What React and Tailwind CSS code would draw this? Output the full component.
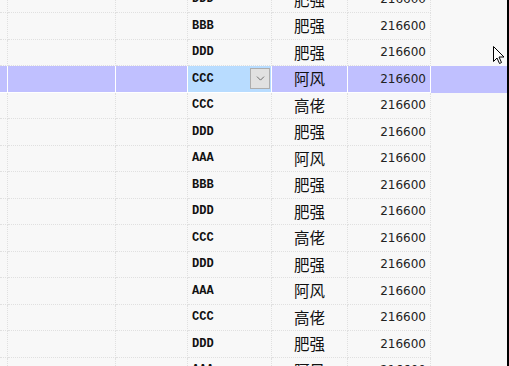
import { ChevronDown } from "lucide-react";

const rows = [
  ["DDD", "肥强"],
  ["BBB", "肥强"],
  ["DDD", "肥强"],
  ["CCC", "阿风"],
  ["CCC", "高佬"],
  ["DDD", "肥强"],
  ["AAA", "阿风"],
  ["BBB", "肥强"],
  ["DDD", "肥强"],
  ["CCC", "高佬"],
  ["DDD", "肥强"],
  ["AAA", "阿风"],
  ["CCC", "高佬"],
  ["DDD", "肥强"],
  ["AAA", "阿风"],
];

const SELECTED = 3;

function Row({ code, name, selected }) {
  const line = selected ? "border-white border-solid" : "border-[#e0e0e0] border-dotted";
  return (
    <div className={`flex shrink-0 h-[26.5px] ${selected ? "bg-[#c0c0ff]" : ""}`}>
      <div className={`w-[8px] shrink-0 border-r border-b ${line}`} />
      <div className={`w-[108px] shrink-0 border-r border-b ${line}`} />
      <div className={`w-[72px] shrink-0 border-r border-b ${line}`} />
      <div
        className={`w-[84px] shrink-0 flex items-center border-r border-b ${line} ${
          selected ? "bg-[#b8dcff]" : ""
        }`}
      >
        <span className="pl-[4px] font-['Liberation_Mono',monospace] font-bold text-[12px] text-[#111] flex-1">
          {code}
        </span>
        {selected && (
          <span className="mr-[1px] w-[20px] h-[21px] flex items-center justify-center bg-[#e1e1e1] border border-[#adadad]">
            <ChevronDown className="w-[13px] h-[13px] text-[#555]" strokeWidth={1.5} />
          </span>
        )}
      </div>
      <div
        className={`w-[76px] shrink-0 flex items-center justify-center border-r border-b ${line} font-['Noto_Sans_CJK_SC',sans-serif] text-[15.5px] text-[#111]`}
      >
        {name}
      </div>
      <div
        className={`w-[83px] shrink-0 flex items-center justify-end pr-[4px] border-r border-b ${line} font-['DejaVu_Sans',sans-serif] text-[12px] text-[#222]`}
      >
        216600
      </div>
      <div className="flex-1" />
    </div>
  );
}

export default function App() {
  return (
    <div className="relative w-[509px] h-[366px] overflow-hidden bg-[#f8f8f8] flex">
      <div className="flex-1 flex flex-col -mt-[13.5px]">
        {rows.map(([code, name], i) => (
          <Row key={i} code={code} name={name} selected={i === SELECTED} />
        ))}
      </div>
      <div className="w-[2px] bg-black shrink-0" />
      <svg
        className="absolute left-[493px] top-[46px]"
        width="12"
        height="19"
        viewBox="0 0 12 19"
      >
        <path
          d="M0.5 0.5 L0.5 15.5 L4 12 L6.5 17.5 L8.5 16.5 L6 11 L11 11 Z"
          fill="#fff"
          stroke="#000"
          strokeWidth="1"
          strokeLinejoin="miter"
        />
      </svg>
    </div>
  );
}
